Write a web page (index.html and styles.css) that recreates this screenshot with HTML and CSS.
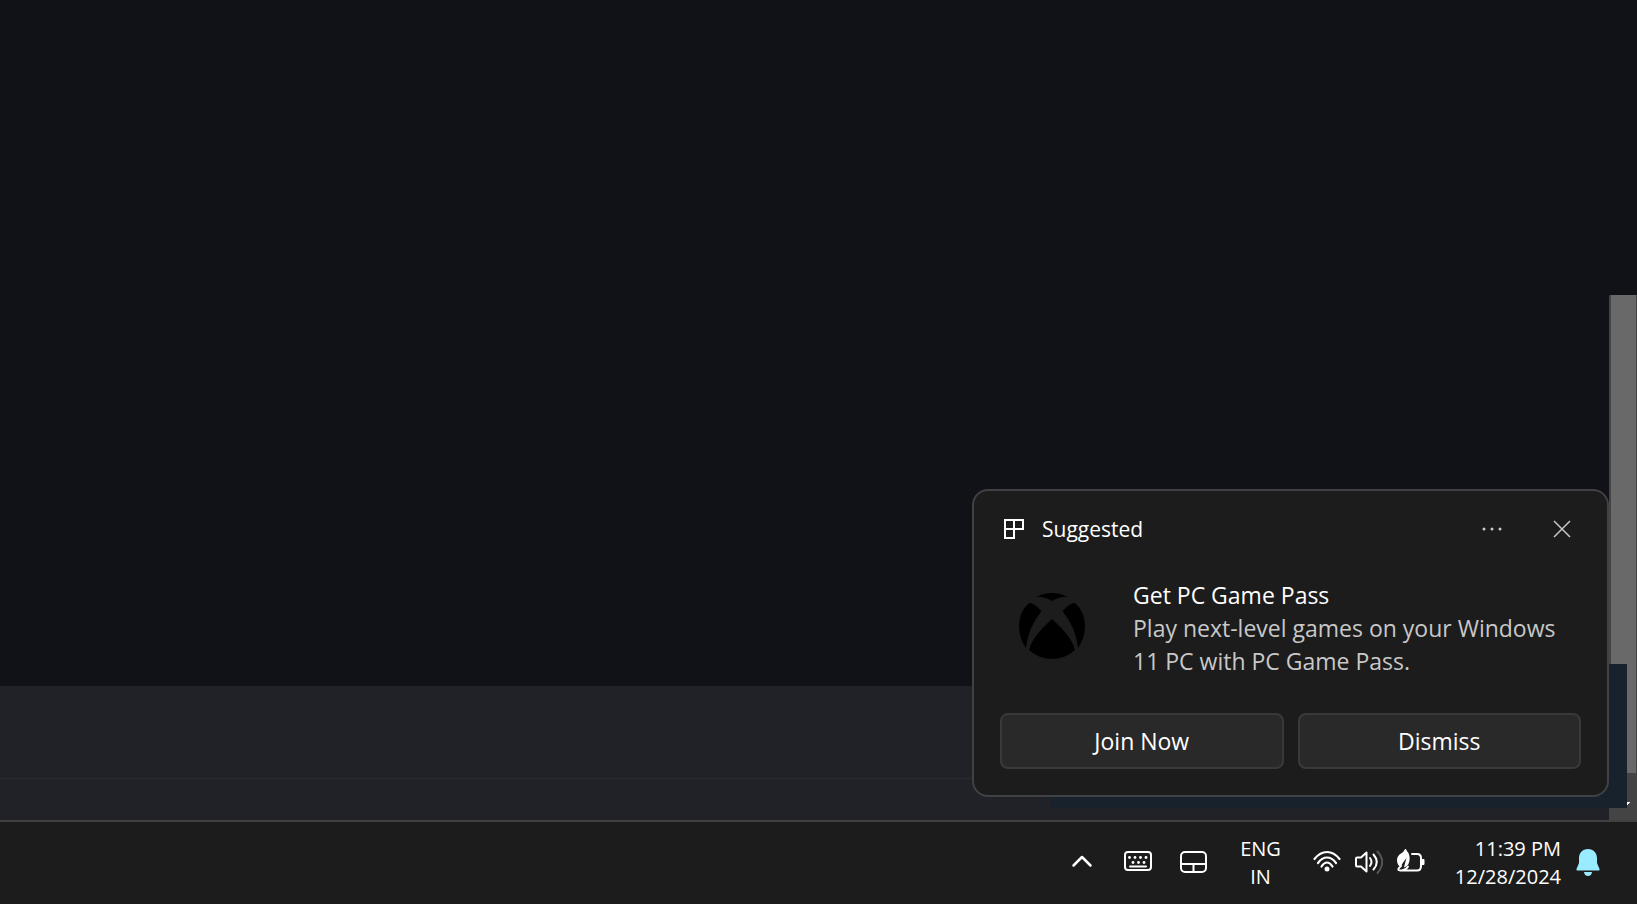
FILE: index.html
```html
<!DOCTYPE html>
<html lang="en">
<head>
  <meta charset="UTF-8">
  <meta name="viewport" content="width=device-width, initial-scale=1.0">
  <title>Desktop</title>
  <link rel="stylesheet" href="styles.css">
</head>
<body>
  <div class="desktop">
    <main class="window">
      <div class="window-content">
        <div class="window-body"></div>
        <div class="window-panel">
          <div class="panel-row"></div>
          <div class="panel-footer"></div>
        </div>
      </div>

      <div class="scrollbar">
        <div class="scrollbar-space"></div>
        <div class="scrollbar-thumb"></div>
        <div class="scrollbar-end">
          <svg class="scrollbar-arrow" width="10" height="8" viewBox="0 0 10 8" fill="#fff">
            <path d="M4 0h3v1H6v1H5v1H4zM0 5h1v1H0z"></path>
          </svg>
        </div>
      </div>

      <div class="popup-back"></div>

      <section class="toast" aria-label="Suggested">
        <div class="toast-header">
          <svg width="20" height="20" viewBox="0 0 20 20" fill="none" stroke="#fff" stroke-width="2">
            <path d="M1 1h18v9H1zM10 1v18H1V1"></path>
          </svg>
          <span class="toast-app">Suggested</span>
          <div class="toast-controls">
            <button class="icon-btn" aria-label="More options">
              <svg width="20" height="20" viewBox="0 0 20 20" fill="currentColor">
                <circle cx="2" cy="10" r="1.5"></circle>
                <circle cx="10" cy="10" r="1.5"></circle>
                <circle cx="18" cy="10" r="1.5"></circle>
              </svg>
            </button>
            <button class="icon-btn" aria-label="Close">
              <svg width="20" height="20" viewBox="0 0 20 20" fill="none" stroke="currentColor" stroke-width="1.5">
                <path d="M2 2l16 16M18 2L2 18"></path>
              </svg>
            </button>
          </div>
        </div>

        <div class="toast-body">
          <svg class="toast-logo" width="68" height="68" viewBox="0 0 68 68" fill="#000">
            <path d="M18 5Q26 1 34 1Q42 1 50 5Q43 4 34 9Q25 4 18 5z"></path>
            <path d="M11 11Q15 10 23.500 19Q10 36 8 56Q1 46 1 34Q1 20 11 11z"></path>
            <path d="M57 11Q53 10 44.500 19Q58 36 60 56Q67 46 67 34Q67 20 57 11z"></path>
            <path d="M34 27Q54 45 57 58Q47 67 34 67Q21 67 11 58Q14 45 34 27z"></path>
          </svg>
          <div class="toast-text">
            <h2>Get PC Game Pass</h2>
            <p>Play next-level games on your Windows 11 PC with PC Game Pass.</p>
          </div>
        </div>

        <div class="toast-actions">
          <button class="btn">Join Now</button>
          <button class="btn">Dismiss</button>
        </div>
      </section>
    </main>

    <footer class="taskbar">
      <div class="tray-tools">
        <button class="tray-btn" aria-label="Show hidden icons">
          <svg width="28" height="28" viewBox="0 0 28 28" fill="none" stroke="currentColor" stroke-width="2.500" stroke-linecap="round" stroke-linejoin="round">
            <path d="M5.500 16.500l8.500-8.500 8.500 8.500"></path>
          </svg>
        </button>
        <button class="tray-btn" aria-label="Touch keyboard">
          <svg width="28" height="28" viewBox="0 0 28 28" fill="none" stroke="currentColor" stroke-width="2">
            <rect x="1" y="3" width="26" height="18" rx="3"></rect>
            <path d="M6 17.500h16" stroke-linecap="round"></path>
            <g fill="currentColor" stroke="none">
              <circle cx="5.500" cy="8.500" r="1.400"></circle>
              <circle cx="11" cy="8.500" r="1.400"></circle>
              <circle cx="16.500" cy="8.500" r="1.400"></circle>
              <circle cx="22" cy="8.500" r="1.400"></circle>
              <circle cx="9" cy="13.500" r="1.400"></circle>
              <circle cx="14.500" cy="13.500" r="1.400"></circle>
              <circle cx="20" cy="13.500" r="1.400"></circle>
            </g>
          </svg>
        </button>
        <button class="tray-btn" aria-label="Virtual touchpad">
          <svg width="28" height="28" viewBox="0 0 28 28" fill="none" stroke="currentColor" stroke-width="2">
            <rect x="1" y="3" width="25" height="20" rx="4"></rect>
            <path d="M1 15h25M13.500 15v8"></path>
          </svg>
        </button>
      </div>

      <button class="tray-btn language">ENG<br>IN</button>

      <button class="tray-btn quick-settings" aria-label="Network, volume, battery">
        <svg width="28" height="28" viewBox="0 0 28 28" fill="none" stroke="currentColor" stroke-width="2.200" stroke-linecap="round">
          <path d="M1.500 10Q7 3 14 3T26.500 10"></path>
          <path d="M5 14Q9 8.500 14 8.500T23 14"></path>
          <path d="M8.500 17.500Q11 13.500 14 13.500T19.500 17.500"></path>
          <circle cx="14" cy="20" r="2.500" fill="currentColor" stroke="none"></circle>
        </svg>
        <svg width="28" height="28" viewBox="0 0 28 28" fill="none" stroke="currentColor" stroke-width="2" stroke-linecap="round" stroke-linejoin="round">
          <path d="M1 9.500Q1 8.500 2 8.500H6L11.500 3.500V22.500L6 17.500H2Q1 17.500 1 16.500z"></path>
          <path d="M15 9Q18 13 15 17"></path>
          <path d="M18.500 5.500Q25 13 18.500 20.500"></path>
          <path d="M22.500 2.500Q32 13 22.500 24" stroke="#555"></path>
        </svg>
        <svg width="28" height="28" viewBox="0 0 28 28" fill="none" stroke="currentColor" stroke-width="2" stroke-linecap="round">
          <path d="M15 5H20Q24 5 24 9V17Q24 21.500 20 21.500H3"></path>
          <path d="M24.500 10.500H27V15.500H24.500z" fill="currentColor" stroke-width="1"></path>
          <path d="M8.500 -1Q9.500 2 11.500 4Q13.500 9 12 13.500Q11 17 7 18.500Q8 14 9.500 9Q6 13 3.500 18Q0 16 0 11Q0 7 4 4.500Q7 3 8.500 -1z" fill="currentColor" stroke="none"></path>
          <path d="M4 17Q1 19.500 1.500 21"></path>
          <path d="M6 21Q9.500 20.500 11 17.500" stroke-width="1.800"></path>
        </svg>
      </button>

      <button class="tray-btn clock">
        <time datetime="2024-12-28T23:39">11:39 PM<br>12/28/2024</time>
        <svg width="24" height="28" viewBox="0 0 24 28" fill="#99ebff">
          <path d="M12 0C17.500 0 21 4 21 9V14L23.500 20Q24 21.500 22.500 21.500H1.500Q0 21.500 .5 20L3 14V9C3 4 6.500 0 12 0z"></path>
          <path d="M8 23H16Q15.500 27 12 27T8 23z"></path>
        </svg>
      </button>
    </footer>
  </div>
</body>
</html>
```
FILE: styles.css
```css
:root {
  --bg-window: #111217;
  --bg-panel: #212227;
  --bg-toast: #1c1c1c;
  --bg-button: #292929;
  --border-toast: #404145;
  --border-button: #393939;
  --scroll-thumb: #696969;
  --scroll-track: #444444;
  --text: #ffffff;
  --text-muted: #c8c8c8;
}

* {
  margin: 0;
  padding: 0;
  box-sizing: border-box;
}

body {
  font-family: 'Segoe UI', 'Open Sans', 'Noto Sans', sans-serif;
  background-color: var(--bg-window);
  color: var(--text);
}

button {
  font-family: inherit;
  color: inherit;
  cursor: pointer;
}

svg {
  display: block;
  flex-shrink: 0;
}

.desktop {
  display: flex;
  flex-direction: column;
  min-height: 100vh;
}

/* Window behind the notification */
.window {
  flex: 1;
  display: flex;
  position: relative;
}

.window-content {
  flex: 1;
  display: flex;
  flex-direction: column;
}

.window-body {
  flex: 1;
}

.window-panel {
  background-color: var(--bg-panel);
}

.panel-row {
  height: 93px;
  border-bottom: 1px solid #2a2b30;
}

.panel-footer {
  height: 41px;
}

.scrollbar {
  width: 28px;
  display: flex;
  flex-direction: column;
}

.scrollbar-space {
  flex: 37 1 0;
}

.scrollbar-thumb {
  flex: 60 1 0;
  background-color: var(--scroll-thumb);
  border-left: 2px solid var(--scroll-track);
  border-right: 1px solid var(--scroll-track);
}

.scrollbar-end {
  height: 47px;
  padding: 29px 0 0 14px;
  background-color: var(--scroll-track);
}

/* Popup showing under the toast */
.popup-back {
  position: absolute;
  right: 10px;
  bottom: 12px;
  width: 576px;
  height: 144px;
  background-color: #18222c;
}

/* Toast */
.toast {
  position: absolute;
  right: 28px;
  bottom: 23px;
  width: 637px;
  padding: 16px 26px 26px;
  background-color: var(--bg-toast);
  border: 2px solid var(--border-toast);
  border-radius: 16px;
}

.toast-header {
  display: flex;
  align-items: center;
  gap: 18px;
  padding-left: 4px;
}

.toast-app {
  flex: 1;
  font-size: 21px;
  line-height: 44px;
}

.toast-controls {
  display: flex;
  gap: 18px;
  margin-right: -7px;
}

.icon-btn {
  display: flex;
  align-items: center;
  justify-content: center;
  width: 52px;
  height: 44px;
  background: transparent;
  border: none;
  border-radius: 6px;
  color: var(--text-muted);
}

.toast-body {
  display: flex;
  align-items: flex-start;
  gap: 47px;
  padding: 28px 4px 35px 18px;
}

.toast-logo {
  margin-top: 13px;
}

.toast-text {
  flex: 1;
  font-size: 23px;
  line-height: 33px;
}

.toast-text h2 {
  font-size: inherit;
  font-weight: 400;
}

.toast-text p {
  color: var(--text-muted);
}

.toast-actions {
  display: flex;
  gap: 14px;
}

.btn {
  flex: 1;
  height: 56px;
  font-size: 23px;
  background-color: var(--bg-button);
  border: 2px solid var(--border-button);
  border-radius: 8px;
}

.btn:hover,
.icon-btn:hover {
  background-color: #323232;
}

/* Taskbar */
.taskbar {
  display: flex;
  align-items: center;
  justify-content: flex-end;
  height: 84px;
  padding-right: 37px;
  background-color: var(--bg-toast);
  border-top: 2px solid #414141;
}

.tray-tools {
  display: flex;
  gap: 28px;
}

.tray-btn {
  background: transparent;
  border: none;
  font-size: 20px;
  line-height: 28px;
}

.language {
  margin: 0 32px;
  text-align: center;
}

.quick-settings {
  display: flex;
  gap: 14px;
}

.clock {
  display: flex;
  align-items: center;
  gap: 15px;
  margin-left: 30px;
  text-align: right;
}
```
